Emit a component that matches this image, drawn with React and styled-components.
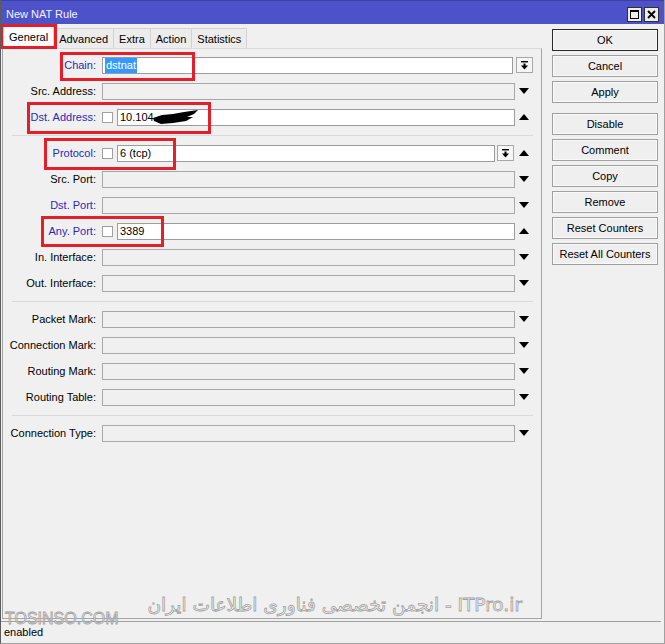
import React from 'react';
import styled, { createGlobalStyle } from 'styled-components';

const GlobalStyle = createGlobalStyle`
html, body {
  margin: 0;
  padding: 0;
  background: #f0f0f0;
}
body {
  font-family: "Liberation Sans", Arial, sans-serif;
  font-size: 11px;
  color: #000;
}
`;

const Window = styled.div`
position: relative;
width: 665px;
height: 644px;
box-sizing: border-box;
background: #f0f0f0;
border-left: 1px solid #5c5c5c;
border-right: 1px solid #a0a0a0;
border-bottom: 1px solid #a0a0a0;
display: flex;
flex-direction: column;
overflow: hidden;
`;

const TitleBar = styled.div`
height: 24px;
flex: none;
background: #4d52c9;
border-top: 1px solid #3c40a8;
box-sizing: border-box;
display: flex;
align-items: center;
justify-content: space-between;
padding: 3px 5px 0 5px;
`;

const Title = styled.span`
color: #f4f4ff;
font-size: 11px;
`;

const TitleButtons = styled.div`
display: flex;
gap: 2px;
`;

const TitleBtn = styled.div`
width: 13px;
height: 13px;
background: #ececec;
border: 1px solid #303030;
display: flex;
align-items: center;
justify-content: center;
`;

const Body = styled.div`
flex: 1;
display: flex;
min-height: 0;
`;

const Main = styled.div`
width: 541px;
display: flex;
flex-direction: column;
`;

const Tabs = styled.div`
height: 24px;
display: flex;
align-items: flex-end;
padding-left: 2px;
`;

const Tab = styled.div`
height: ${p => (p.$active ? '23px' : '20px')};
box-sizing: border-box;
padding: 0 5px;
display: flex;
align-items: center;
background: ${p => (p.$active ? '#fbfbfb' : '#ececec')};
border: 1px solid #d2d2d2;
border-bottom: none;
margin-right: -1px;
font-size: 11px;
`;

const Panel = styled.div`
height: 571px;
margin-left: 1px;
box-sizing: border-box;
border: 1px solid #a6a6a6;
border-top-color: #dadada;
padding: 3px 8px 0 0;
display: flex;
flex-direction: column;
`;

const RowWrap = styled.div`
height: 26px;
display: flex;
align-items: center;
`;

const Label = styled.div`
width: 93px;
margin-right: 6px;
text-align: right;
white-space: nowrap;
color: ${p => (p.$blue ? '#2a2ab8' : '#000')};
`;

const Check = styled.div`
width: 11px;
height: 11px;
box-sizing: border-box;
background: #fff;
border: 1px solid #a0a0a0;
margin-right: 4px;
flex: none;
`;

const Field = styled.div`
flex: 1;
height: 17px;
box-sizing: border-box;
border: 1px solid ${p => (p.$white ? '#9c9c9c' : '#a8a8a8')};
background: ${p => (p.$white ? '#fff' : '#f0f0f0')};
margin-right: ${p => p.$gap || 0}px;
padding-left: 2px;
display: flex;
align-items: center;
white-space: nowrap;
overflow: hidden;
`;

const Selected = styled.span`
background: #3399ff;
color: #fff;
padding: 0 1px;
line-height: 15px;
`;

const Combo = styled.div`
width: 17px;
height: 16px;
box-sizing: border-box;
flex: none;
border: 1px solid #a8a8a8;
background: #f6f6f6;
display: flex;
align-items: center;
justify-content: center;
margin-left: ${p => p.$ml || 0}px;
margin-right: ${p => p.$mr || 0}px;
`;

const ArrowCell = styled.div`
width: 18px;
flex: none;
display: flex;
align-items: center;
justify-content: center;
`;

const Separator = styled.div`
height: 10px;
display: flex;
align-items: center;
padding-left: 9px;
&::after {
  content: "";
  flex: 1;
  height: 1px;
  background: #d9d9d9;
}
`;

const Side = styled.div`
margin-left: 10px;
padding-top: 5px;
width: 106px;
display: flex;
flex-direction: column;
gap: 4px;
`;

const Button = styled.div`
height: 22px;
box-sizing: border-box;
border: 1px solid ${p => (p.$default ? '#2a2a2a' : '#a0a0a0')};
box-shadow: inset 0 0 0 1px #f9f9f9;
background: #efefef;
display: flex;
align-items: center;
justify-content: center;
font-size: 11px;
margin-top: ${p => p.$mt || 0}px;
`;

const StatusBar = styled.div`
height: 22px;
flex: none;
box-sizing: border-box;
margin-right: 3px;
border-top: 1px solid #a0a0a0;
padding: 2px 0 0 3px;
font-size: 11px;
line-height: 16px;
`;

const Mark = styled.div`
position: absolute;
left: ${p => p.$x}px;
top: ${p => p.$y}px;
width: ${p => p.$w}px;
height: ${p => p.$h}px;
box-sizing: border-box;
border: 3px solid #e3202a;
pointer-events: none;
`;

const Watermark = styled.div`
position: absolute;
white-space: nowrap;
color: rgba(250, 250, 250, 0.6);
-webkit-text-stroke: 0.8px #a2a2a2;
pointer-events: none;
`;

const SiteMark = styled(Watermark)`
right: 142px;
top: 594px;
font-family: "DejaVu Sans", "Liberation Sans", sans-serif;
font-size: 18.5px;
`;

const DomainMark = styled(Watermark)`
left: 4px;
top: 610px;
font-family: "Liberation Sans", Arial, sans-serif;
font-size: 16px;
`;

const Tri = ({ dir }) => (
  <svg width="10" height="6" viewBox="0 0 10 6">
    {dir === 'up'
      ? <polygon points="0,6 10,6 5,0" fill="#000" />
      : <polygon points="0,0 10,0 5,6" fill="#000" />}
  </svg>
);

const ComboIcon = () => (
  <svg width="9" height="9" viewBox="0 0 9 9">
    <rect x="1" y="0" width="7" height="1.4" fill="#000" />
    <rect x="3.5" y="2.5" width="2" height="2.5" fill="#000" />
    <polygon points="1,4.5 8,4.5 4.5,8.5" fill="#000" />
  </svg>
);

const Scribble = () => (
  <svg width="46" height="16" viewBox="0 0 46 16" style={{ marginLeft: -1 }}>
    <path d="M0 9 L9 6 L20 5 L31 3 L45 1 L41 5 L34 8 L40 8 L33 12 L20 14 L8 15 L1 12 Z" fill="#000" />
  </svg>
);

const Row = ({ label, blue, check, white, combo, arrow = 'down', children }) => (
  <RowWrap>
    <Label $blue={blue}>{label}:</Label>
    {check && <Check />}
    <Field $white={white} $gap={combo === 'only' ? 2 : 0}>{children}</Field>
    {combo === 'with' && <Combo $ml={2} $mr={1}><ComboIcon /></Combo>}
    <ArrowCell>
      {combo === 'only' ? <Combo><ComboIcon /></Combo> : <Tri dir={arrow} />}
    </ArrowCell>
  </RowWrap>
);

const App = () => {
  const tabs = ['General', 'Advanced', 'Extra', 'Action', 'Statistics'];
  const buttons = ['OK', 'Cancel', 'Apply', 'Disable', 'Comment', 'Copy', 'Remove', 'Reset Counters', 'Reset All Counters'];

  return (
    <>
      <GlobalStyle />
      <Window>
        <TitleBar>
          <Title>New NAT Rule</Title>
          <TitleButtons>
            <TitleBtn>
              <svg width="9" height="9" viewBox="0 0 9 9">
                <rect x="0.5" y="0.5" width="8" height="8" fill="none" stroke="#000" />
                <rect x="0.5" y="0.5" width="8" height="1.5" fill="#000" />
              </svg>
            </TitleBtn>
            <TitleBtn>
              <svg width="9" height="9" viewBox="0 0 9 9">
                <path d="M1 1 L8 8 M8 1 L1 8" stroke="#000" strokeWidth="1.8" />
              </svg>
            </TitleBtn>
          </TitleButtons>
        </TitleBar>

        <Body>
          <Main>
            <Tabs>
              {tabs.map((t, i) => <Tab key={t} $active={i === 0}>{t}</Tab>)}
            </Tabs>
            <Panel>
              <Row label="Chain" blue white combo="only">
                <Selected>dstnat</Selected>
              </Row>
              <Row label="Src. Address" />
              <Row label="Dst. Address" blue check white arrow="up">
                10.104<Scribble />
              </Row>
              <Separator />
              <Row label="Protocol" blue check white combo="with" arrow="up">6 (tcp)</Row>
              <Row label="Src. Port" />
              <Row label="Dst. Port" blue />
              <Row label="Any. Port" blue check white arrow="up">3389</Row>
              <Row label="In. Interface" />
              <Row label="Out. Interface" />
              <Separator />
              <Row label="Packet Mark" />
              <Row label="Connection Mark" />
              <Row label="Routing Mark" />
              <Row label="Routing Table" />
              <Separator />
              <Row label="Connection Type" />
            </Panel>
          </Main>

          <Side>
            {buttons.map((b, i) => (
              <Button key={b} $default={i === 0} $mt={i === 3 ? 6 : 0}>{b}</Button>
            ))}
          </Side>
        </Body>

        <StatusBar>enabled</StatusBar>

        <Mark $x={-1} $y={24} $w={57} $h={25} />
        <Mark $x={59} $y={52} $w={135} $h={29} />
        <Mark $x={26} $y={102} $w={184} $h={32} />
        <Mark $x={43} $y={138} $w={132} $h={32} />
        <Mark $x={40} $y={216} $w={123} $h={31} />

        <SiteMark dir="rtl">ITPro.ir - انجمن تخصصی فناوری اطلاعات ایران</SiteMark>
        <DomainMark>TOSINSO.COM</DomainMark>
      </Window>
    </>
  );
};

export default App;
